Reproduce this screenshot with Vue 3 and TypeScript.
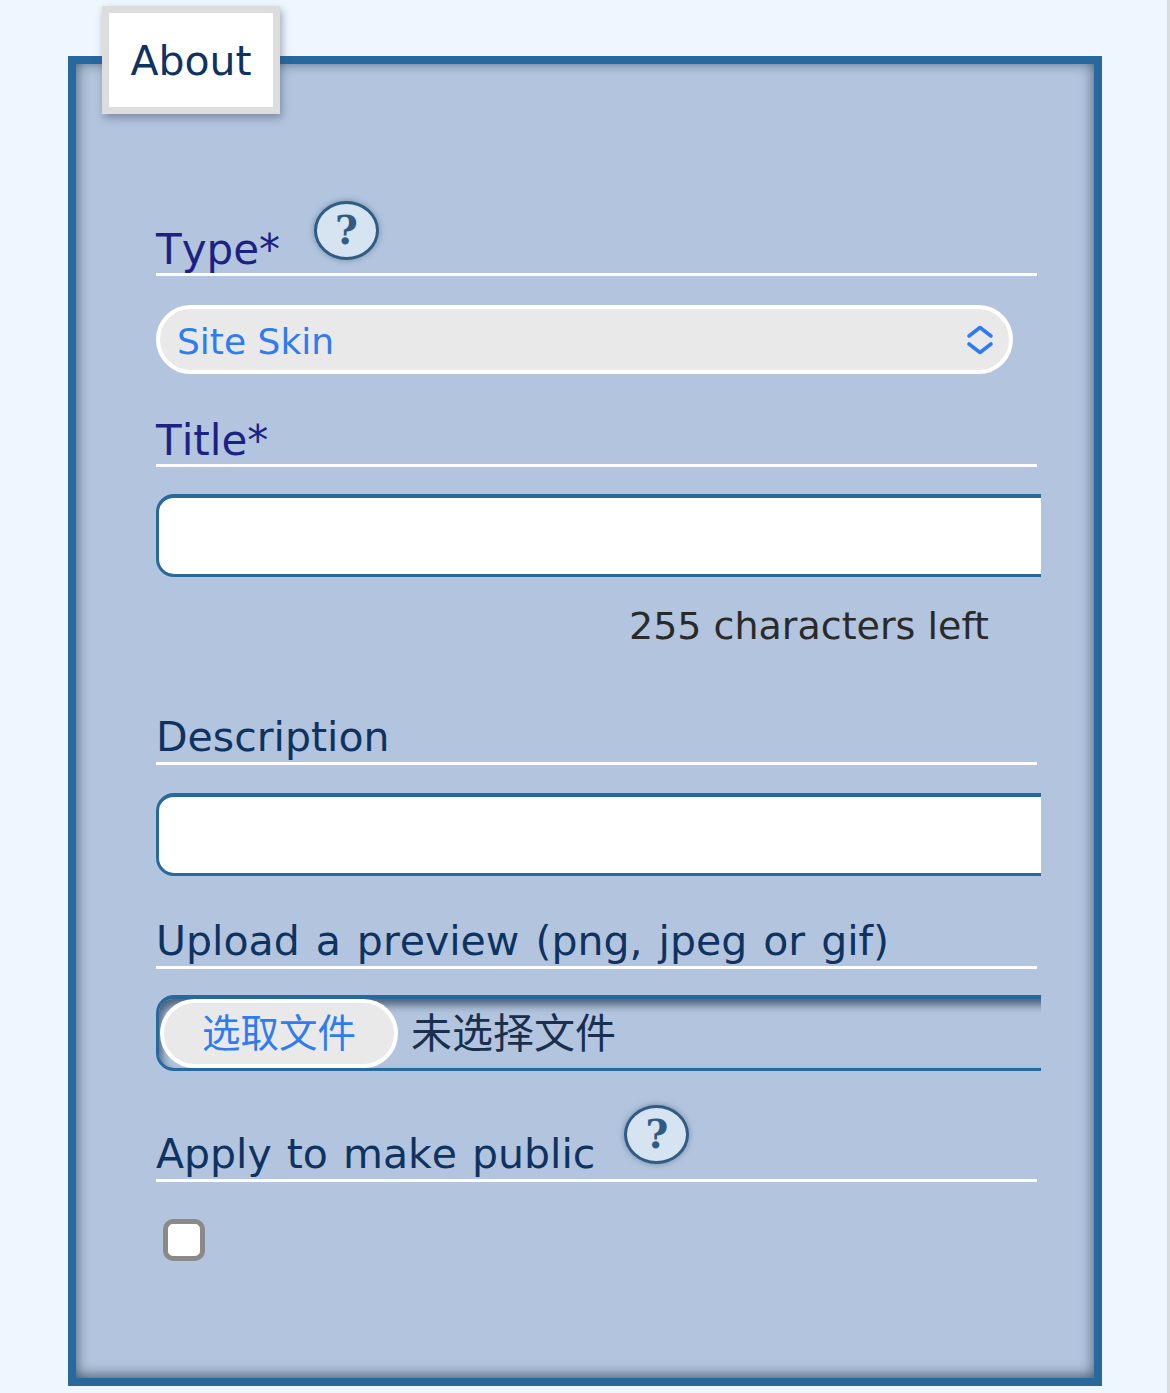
<script setup lang="ts">
const title = 'About'
</script>

<template>
  <main class="page">
    <section class="panel">
      <h2 class="legend">{{ title }}</h2>
      <form class="form">
        <div class="label label-type">
          <span class="req">Type*</span>
          <span class="help help-type">?</span>
        </div>
        <div class="select">
          <span class="select-value">Site Skin</span>
          <svg class="chev" width="28" height="30" viewBox="0 0 28 30" fill="none" stroke="#2f7bf0" stroke-width="3.6" stroke-linecap="round" stroke-linejoin="round">
            <path d="M3 11 14 2.500 25 11" />
            <path d="M3 19 14 27.500 25 19" />
          </svg>
        </div>
        <div class="label label-title"><span class="req">Title*</span></div>
        <div class="clip clip-title"><div class="input"></div></div>
        <p class="count">255 characters left</p>
        <div class="label label-desc"><span>Description</span></div>
        <div class="clip clip-desc"><div class="input"></div></div>
        <div class="label label-upload"><span>Upload a preview (png, jpeg or gif)</span></div>
        <div class="clip clip-file">
          <div class="file">
            <span class="file-btn">选取文件</span>
            <span class="file-name">未选择文件</span>
          </div>
        </div>
        <div class="label label-apply">
          <span>Apply to make public</span>
          <span class="help help-apply">?</span>
        </div>
        <span class="check"></span>
      </form>
    </section>
  </main>
</template>

<style>
html, body { margin: 0; background: #eef7ff; }
</style>

<style scoped>
.page {
  box-sizing: border-box;
  width: 1170px;
  height: 1393px;
  padding: 56px 65px 7px 68px;
  overflow: hidden;
  background: #eef7ff;
  border-right: 3px solid #d8dde2;
  font-family: "DejaVu Sans", "Noto Sans CJK SC", sans-serif;
  color: #0f3361;
}
.panel {
  box-sizing: border-box;
  width: 1034px;
  height: 1330px;
  border: 8px solid #28699d;
  background: #b3c5de;
  box-shadow: inset 0 -2px 14px #3f5468;
}
.legend {
  box-sizing: border-box;
  width: 178px;
  height: 108px;
  margin: -58px 0 0 26px;
  border: 7px solid #dddddd;
  background: #fff;
  font-size: 41px;
  font-weight: 400;
  line-height: 96px;
  text-align: center;
  box-shadow: 2px 4px 8px rgba(60, 70, 90, 0.45);
}
.form {
  display: flex;
  flex-direction: column;
  align-items: flex-start;
  width: 885px;
  margin-left: 80px;
}
.label {
  box-sizing: border-box;
  display: flex;
  align-items: flex-end;
  width: 881px;
  height: 60px;
  border-bottom: 3px solid #fff;
  font-size: 41px;
  font-kerning: none;
  word-spacing: 3px;
  line-height: 50px;
  white-space: nowrap;
}
.req { color: #1c2284; font-size: 42px; margin-bottom: -2px; }
.label-type { margin-top: 102px; }
.label-title { margin-top: 33px; height: 60px; }
.label-desc { margin-top: 56px; }
.label-upload { margin-top: 33px; }
.label-apply { margin-top: 31px; height: 80px; word-spacing: 2px; }
.help {
  box-sizing: border-box;
  flex: none;
  width: 65px;
  height: 59px;
  border: 3px solid #2f5b84;
  border-radius: 50%;
  background: #d6e3f1;
  color: #2f5b84;
  font-family: "DejaVu Serif", serif;
  font-size: 39px;
  font-weight: 700;
  line-height: 52px;
  text-align: center;
  box-shadow: 0 0 6px rgba(60, 90, 130, 0.55);
}
.help-type { margin: 0 0 13px 34px; }
.help-apply { margin: 0 0 15px 29px; }
.select {
  box-sizing: border-box;
  display: flex;
  align-items: center;
  justify-content: space-between;
  width: 857px;
  height: 69px;
  margin-top: 29px;
  padding: 0 15px 0 17px;
  border: 4px solid #fff;
  border-radius: 35px;
  background: #e9e9e9;
  color: #2f7bf0;
  font-size: 36px;
}
.select-value { padding-top: 3px; }
.clip { width: 885px; overflow: hidden; }
.clip-title { margin-top: 27px; }
.clip-desc { margin-top: 28px; }
.clip-file { margin-top: 26px; }
.input {
  box-sizing: border-box;
  width: 1000px;
  height: 83px;
  border: 3px solid #28699d;
  border-top-width: 4px;
  border-radius: 18px;
  background: #fff;
}
.count {
  width: 833px;
  margin: 26px 0 0;
  color: #2a2a2a;
  font-size: 38px;
  line-height: 46px;
  text-align: right;
}
.file {
  box-sizing: border-box;
  display: flex;
  align-items: center;
  gap: 13px;
  width: 1000px;
  height: 76px;
  padding: 0 0 0 1px;
  border: 3px solid #28699d;
  border-top-width: 4px;
  border-radius: 18px;
  box-shadow: inset 3px 6px 8px rgba(30, 50, 80, 0.7);
  color: #1a2f4e;
  font-size: 41px;
}
.file-btn {
  box-sizing: border-box;
  width: 238px;
  height: 69px;
  border: 4px solid #fff;
  border-radius: 35px;
  background: #e9e9e9;
  color: #2f7bf0;
  font-size: 38.5px;
  line-height: 61px;
  text-align: center;
}
.file-name { padding-bottom: 8px; }
.check {
  box-sizing: border-box;
  width: 42px;
  height: 42px;
  margin: 37px 0 0 7px;
  border: 5px solid #8a8a8a;
  border-radius: 10px;
  background: #fff;
}
</style>
